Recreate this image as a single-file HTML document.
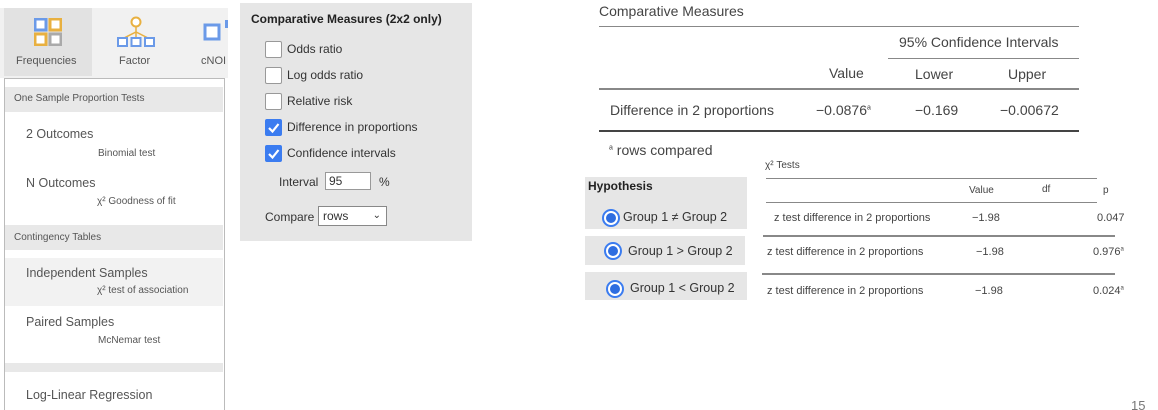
<!DOCTYPE html><html><head><style>
html,body{margin:0;width:1158px;height:410px;overflow:hidden}
body{position:relative;background:#fff;font-family:"Segoe UI","Liberation Sans",sans-serif;color:#333}
.a{position:absolute;white-space:nowrap}
.cb{position:absolute;width:15px;height:15px;border:1px solid #999;background:#fff;border-radius:2px;left:265px}
.cb.on{background:#3b7cf0;border-color:#3b7cf0}
.rad{position:absolute;width:14px;height:14px;border:2px solid #3b7cf0;border-radius:50%;background:#fff}
.rad::after{content:"";position:absolute;left:2px;top:2px;width:10px;height:10px;border-radius:50%;background:#2e6de0}
.ln{position:absolute;height:1px;background:#888}
</style></head><body>
<div class="a" style="left:0;top:8px;width:228px;height:70px;background:#f1f1f1"></div>
<div class="a" style="left:4px;top:8px;width:88px;height:68px;background:#e2e2e2"></div>
<svg class="a" style="left:34px;top:18px" width="28" height="28"><rect x="1" y="1" width="11" height="11" fill="#fff" stroke="#6b9ae8" stroke-width="3"/><rect x="16" y="1" width="11" height="11" fill="#fff" stroke="#e8b040" stroke-width="3"/><rect x="1" y="16" width="11" height="11" fill="#fff" stroke="#e8b040" stroke-width="3"/><rect x="16" y="16" width="11" height="11" fill="#fff" stroke="#aaa" stroke-width="3"/></svg>
<div class="a" style="left:16px;top:55px;font-size:11px;color:#555">Frequencies</div>
<svg class="a" style="left:116px;top:16px" width="40" height="32"><circle cx="20" cy="6" r="4.5" fill="#fff" stroke="#e8b040" stroke-width="2"/><path d="M20 11V16M8 22L20 16L32 22M20 16V22" stroke="#e8b040" fill="none" stroke-width="1.5"/><rect x="2" y="22" width="9" height="8" fill="#fff" stroke="#6b9ae8" stroke-width="2"/><rect x="15.5" y="22" width="9" height="8" fill="#fff" stroke="#6b9ae8" stroke-width="2"/><rect x="29" y="22" width="9" height="8" fill="#fff" stroke="#6b9ae8" stroke-width="2"/></svg>
<div class="a" style="left:119px;top:55px;font-size:11px;color:#555">Factor</div>
<svg class="a" style="left:203px;top:20px" width="25" height="25"><rect x="2" y="5" width="14" height="14" fill="#fff" stroke="#6b9ae8" stroke-width="3"/><rect x="22" y="0" width="4" height="8" fill="#6b9ae8"/></svg>
<div class="a" style="left:201px;top:55px;font-size:11px;color:#555">cNOI</div>
<div class="a" style="left:4px;top:78px;width:219px;height:340px;background:#fff;border:1px solid #bbb"></div>
<div class="a" style="left:5px;top:87px;width:218px;height:25px;background:#e8e8e8"></div>
<div class="a" style="left:14px;top:93px;font-size:10px;color:#555">One Sample Proportion Tests</div>
<div class="a" style="left:26px;top:127px;font-size:12.5px;color:#555">2 Outcomes</div>
<div class="a" style="left:98px;top:148px;font-size:10px;color:#555">Binomial test</div>
<div class="a" style="left:26px;top:176px;font-size:12.5px;color:#555">N Outcomes</div>
<div class="a" style="left:97px;top:196px;font-size:10px;color:#555">χ² Goodness of fit</div>
<div class="a" style="left:5px;top:225px;width:218px;height:25px;background:#e8e8e8"></div>
<div class="a" style="left:14px;top:232px;font-size:10px;color:#555">Contingency Tables</div>
<div class="a" style="left:5px;top:258px;width:218px;height:48px;background:#f2f2f2"></div>
<div class="a" style="left:26px;top:266px;font-size:12.5px;color:#555">Independent Samples</div>
<div class="a" style="left:97px;top:285px;font-size:10px;color:#555">χ² test of association</div>
<div class="a" style="left:26px;top:315px;font-size:12.5px;color:#555">Paired Samples</div>
<div class="a" style="left:98px;top:335px;font-size:10px;color:#555">McNemar test</div>
<div class="a" style="left:5px;top:363px;width:218px;height:9px;background:#e8e8e8"></div>
<div class="a" style="left:26px;top:388px;font-size:12.5px;color:#555">Log-Linear Regression</div>
<div class="a" style="left:240px;top:3px;width:232px;height:238px;background:#e6e6e6"></div>
<div class="a" style="left:251px;top:12px;font-size:12px;font-weight:bold;color:#222">Comparative Measures (2x2 only)</div>
<div class="cb" style="top:41px"></div><div class="a" style="left:287px;top:42px;font-size:12px">Odds ratio</div>
<div class="cb" style="top:67px"></div><div class="a" style="left:287px;top:68px;font-size:12px">Log odds ratio</div>
<div class="cb" style="top:93px"></div><div class="a" style="left:287px;top:94px;font-size:12px">Relative risk</div>
<div class="cb on" style="top:119px"><svg width="15" height="15"><path d="M3 8L6.5 11.5L12.5 4" stroke="#fff" stroke-width="2.2" fill="none"/></svg></div><div class="a" style="left:287px;top:120px;font-size:12px">Difference in proportions</div>
<div class="cb on" style="top:145px"><svg width="15" height="15"><path d="M3 8L6.5 11.5L12.5 4" stroke="#fff" stroke-width="2.2" fill="none"/></svg></div><div class="a" style="left:287px;top:146px;font-size:12px">Confidence intervals</div>
<div class="a" style="left:279px;top:175px;font-size:12px">Interval</div>
<div class="a" style="left:325px;top:172px;height:18px;background:#fff;border:1px solid #999;font-size:12px;padding-left:3px;box-sizing:border-box;line-height:16px;width:46px">95</div>
<div class="a" style="left:379px;top:175px;font-size:12px">%</div>
<div class="a" style="left:265px;top:210px;font-size:12px">Compare</div>
<div class="a" style="left:318px;top:206px;width:69px;height:20px;background:#fff;border:1px solid #888;box-sizing:border-box;font-size:12px;padding-left:4px;line-height:18px">rows<span style="position:absolute;right:5px;top:0;font-size:10px">&#x2304;</span></div>
<div class="a" style="left:599px;top:3px;font-size:14px;color:#444">Comparative Measures</div>
<div class="ln" style="left:599px;top:26px;width:480px"></div>
<div class="a" style="left:899px;top:34px;font-size:14px;color:#444">95% Confidence Intervals</div>
<div class="ln" style="left:888px;top:58px;width:191px"></div>
<div class="a" style="left:829px;top:65px;font-size:14px;color:#444">Value</div>
<div class="a" style="left:915px;top:66px;font-size:14px;color:#444">Lower</div>
<div class="a" style="left:1008px;top:66px;font-size:14px;color:#444">Upper</div>
<div class="ln" style="left:599px;top:88px;width:480px;height:2px"></div>
<div class="a" style="left:610px;top:102px;font-size:14px;color:#444">Difference in 2 proportions</div>
<div class="a" style="left:816px;top:102px;font-size:14px;color:#444">−0.0876<sup style="font-size:7px">a</sup></div>
<div class="a" style="left:915px;top:102px;font-size:14px;color:#444">−0.169</div>
<div class="a" style="left:1000px;top:102px;font-size:14px;color:#444">−0.00672</div>
<div class="ln" style="left:599px;top:130px;width:480px;height:2px;background:#444"></div>
<div class="a" style="left:609px;top:142px;font-size:14px;color:#444"><sup style="font-size:7px">a</sup> rows compared</div>
<div class="a" style="left:765px;top:160px;font-size:10px;color:#444">χ² Tests</div>
<div class="ln" style="left:766px;top:178px;width:331px"></div>
<div class="a" style="left:969px;top:185px;font-size:10px;color:#444">Value</div>
<div class="a" style="left:1042px;top:184px;font-size:10px;color:#444">df</div>
<div class="a" style="left:1103px;top:185px;font-size:10px;color:#444">p</div>
<div class="ln" style="left:766px;top:202px;width:331px"></div>
<div class="a" style="left:774px;top:212px;font-size:11px;color:#444">z test difference in 2 proportions</div>
<div class="a" style="left:972px;top:212px;font-size:11px;color:#444">−1.98</div>
<div class="a" style="left:1097px;top:212px;font-size:11px;color:#444">0.047</div>
<div class="ln" style="left:763px;top:235px;width:352px;height:2px"></div>
<div class="a" style="left:767px;top:246px;font-size:11px;color:#444">z test difference in 2 proportions</div>
<div class="a" style="left:976px;top:246px;font-size:11px;color:#444">−1.98</div>
<div class="a" style="left:1093px;top:246px;font-size:11px;color:#444">0.976<sup style="font-size:6px">a</sup></div>
<div class="ln" style="left:762px;top:273px;width:353px;height:2px"></div>
<div class="a" style="left:767px;top:285px;font-size:11px;color:#444">z test difference in 2 proportions</div>
<div class="a" style="left:975px;top:285px;font-size:11px;color:#444">−1.98</div>
<div class="a" style="left:1093px;top:285px;font-size:11px;color:#444">0.024<sup style="font-size:6px">a</sup></div>
<div class="a" style="left:585px;top:177px;width:162px;height:52px;background:#e6e6e6"></div>
<div class="a" style="left:588px;top:179px;font-size:12px;font-weight:bold;color:#222">Hypothesis</div>
<div class="rad" style="left:602px;top:209px"></div>
<div class="a" style="left:623px;top:210px;font-size:12.5px;color:#333">Group 1 ≠ Group 2</div>
<div class="a" style="left:585px;top:236px;width:160px;height:29px;background:#e6e6e6"></div>
<div class="rad" style="left:604px;top:242px"></div>
<div class="a" style="left:628px;top:244px;font-size:12.5px;color:#333">Group 1 &gt; Group 2</div>
<div class="a" style="left:585px;top:272px;width:162px;height:28px;background:#e6e6e6"></div>
<div class="rad" style="left:606px;top:280px"></div>
<div class="a" style="left:630px;top:281px;font-size:12.5px;color:#333">Group 1 &lt; Group 2</div>
<div class="a" style="left:1131px;top:398px;font-size:13px;color:#777">15</div>
</body></html>
